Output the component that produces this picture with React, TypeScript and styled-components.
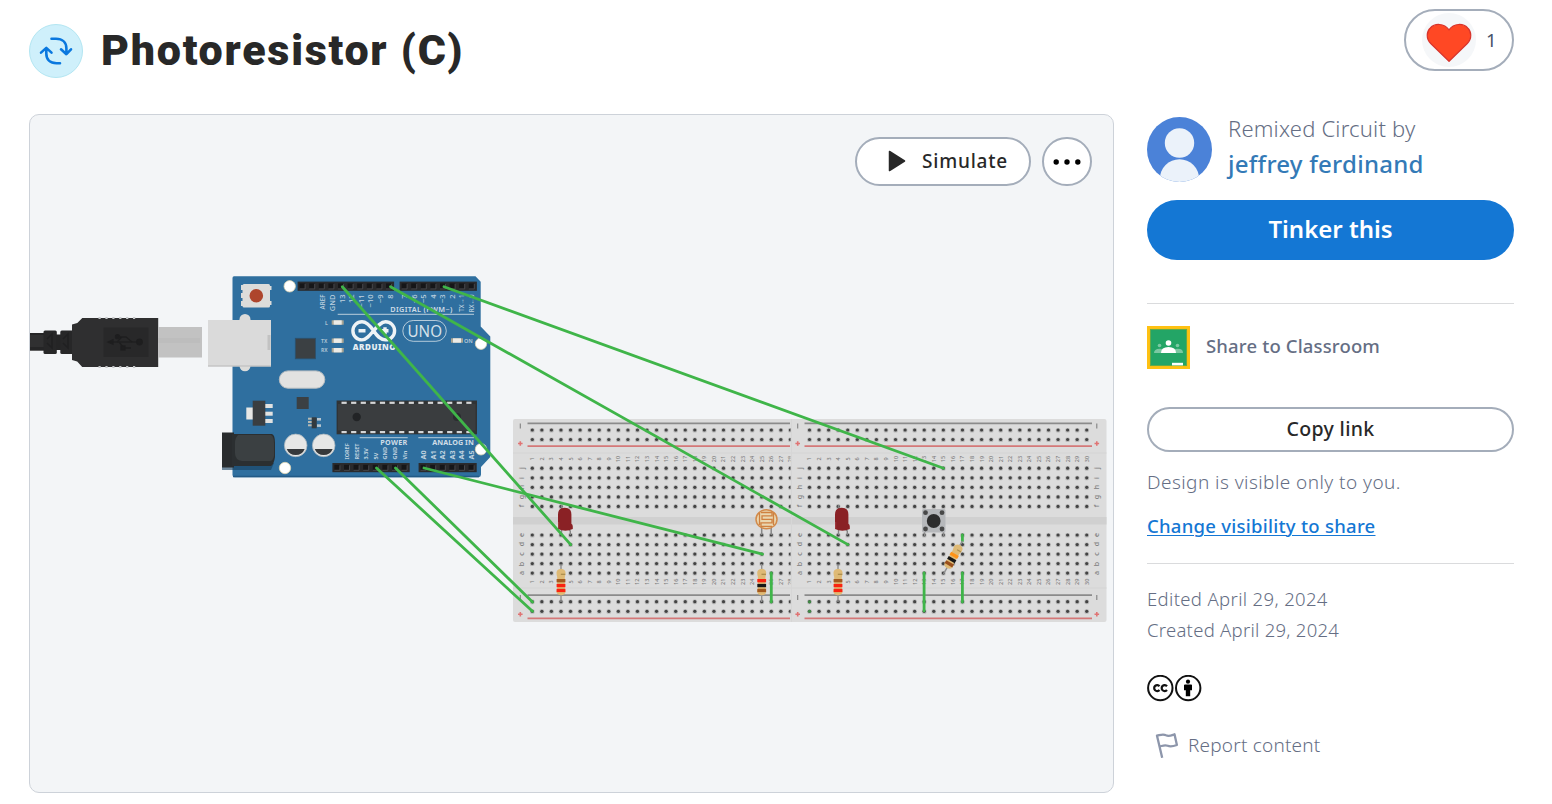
import React from "react";
import styled, { createGlobalStyle } from "styled-components";

const Global = createGlobalStyle`
  * { box-sizing: border-box; }
  body { margin: 0; background: #fff; overflow: hidden; font-family: "Noto Sans", "Open Sans", sans-serif; }
  button { font-family: inherit; margin: 0; cursor: pointer; }
`;

const Page = styled.div`
  width: 1552px;
  height: 804px;
  padding: 9px 38px 0 29px;
`;
const Header = styled.header`
  height: 105px;
  display: flex;
  align-items: flex-start;
  justify-content: space-between;
`;
const TitleGroup = styled.div`
  display: flex;
  align-items: center;
  gap: 18px;
  padding-top: 15px;
`;
const RemixBadge = styled.div`
  width: 54px;
  height: 54px;
  border-radius: 50%;
  background: #cff0fb;
  border: 1px solid #b3e6f2;
  display: flex;
  align-items: center;
  justify-content: center;
`;
const Title = styled.h1`
  margin: 0;
  font: 900 43px/52px Roboto, sans-serif;
  letter-spacing: 1.75px;
  padding-bottom: 2px;
  color: #282828;
  white-space: nowrap;
`;
const LikeButton = styled.button`
  width: 110px;
  height: 62px;
  padding: 0 0 0 16px;
  border: 2px solid #a4adba;
  border-radius: 31px;
  background: #fff;
  display: flex;
  align-items: center;
  gap: 10px;
`;
const HeartDisc = styled.span`
  width: 54px;
  height: 54px;
  border-radius: 50%;
  background: #f5f7f9;
  display: flex;
`;
const Main = styled.main`
  display: grid;
  grid-template-columns: 1085px 367px;
  column-gap: 33px;
`;
const Preview = styled.section`
  position: relative;
  height: 679px;
  border: 1px solid #cdd2d9;
  border-radius: 10px;
  background: #f3f5f7;
  overflow: hidden;
`;
const Drawing = styled.svg`
  display: block;
  width: 1083px;
  height: 677px;
`;
const Actions = styled.div`
  position: absolute;
  top: 22px;
  right: 21px;
  display: flex;
  gap: 11px;
`;
const SimulateButton = styled.button`
  width: 176px;
  height: 49px;
  padding: 0 0 1px 31px;
  border: 2px solid #a4adba;
  border-radius: 25px;
  background: #fff;
  display: flex;
  align-items: center;
  gap: 16px;
`;
const MoreButton = styled.button`
  width: 50px;
  height: 49px;
  padding: 0;
  border: 2px solid #a4adba;
  border-radius: 25px;
  background: #fff;
  display: flex;
  align-items: center;
  justify-content: center;
`;
const Sidebar = styled.aside`
  padding-top: 3px;
  display: flex;
  flex-direction: column;
`;
const Label = styled.span<{ $size: number; $weight?: number; $color?: string; $track?: number; $line?: number }>`
  font-size: ${(p) => p.$size}px;
  font-weight: ${(p) => p.$weight ?? 350};
  color: ${(p) => p.$color ?? "#656e84"};
  letter-spacing: ${(p) => p.$track ?? 0}px;
  line-height: ${(p) => p.$line ?? 30}px;
  white-space: nowrap;
`;
const Author = styled.div`
  height: 65px;
  display: flex;
  gap: 16px;
`;
const AuthorText = styled.div`
  display: flex;
  flex-direction: column;
  margin-top: -6px;
`;
const TinkerButton = styled.button`
  margin-top: 18px;
  height: 60px;
  padding: 0 0 2px;
  border: 0;
  border-radius: 30px;
  background: #1477d4;
`;
const Divider = styled.hr<{ $top: number }>`
  width: 100%;
  height: 1px;
  border: 0;
  margin: ${(p) => p.$top}px 0 0;
  background: #dadbdd;
`;
const Classroom = styled.div`
  margin-top: 22px;
  height: 43px;
  display: flex;
  align-items: center;
  gap: 16px;
`;
const ClassroomName = styled.div`
  padding-bottom: 3px;
`;
const CopyButton = styled.button`
  margin-top: 38px;
  height: 45px;
  padding: 0 0 2px;
  border: 2px solid #a4adba;
  border-radius: 23px;
  background: #fff;
`;
const Visibility = styled.div`
  display: flex;
  flex-direction: column;
  gap: 14px;
  padding-top: 15px;
`;
const ShareLink = styled.a`
  align-self: flex-start;
  font-size: 18.5px;
  font-weight: 500;
  line-height: 30px;
  letter-spacing: 0.26px;
  color: #1477d4;
  white-space: nowrap;
  text-decoration: underline;
  text-decoration-thickness: 1px;
  text-underline-offset: 2px;
`;
const Dates = styled.div`
  display: flex;
  flex-direction: column;
  margin-top: 19px;
`;
const License = styled.div`
  display: flex;
  margin-top: 30px;
`;
const Report = styled.div`
  display: flex;
  align-items: center;
  gap: 9px;
  margin-top: 27px;
  padding-left: 8px;
`;

const PITCH = 9.56;
const WIRE = "#3fb549";
const METAL = "#dcdcda";

const range = (n: number) => Array.from({ length: n }, (_, i) => i);

const HOLE_ROWS = [430, 439.5, 468.2, 477.8, 487.3, 496.9, 506.4, 535, 544.6, 554.1, 563.6, 573.1, 601.7, 611.3];
const LETTERS: [string, number][] = [
  ["j", 468], ["i", 478], ["h", 487], ["g", 497], ["f", 506],
  ["e", 535], ["d", 544], ["c", 554], ["b", 564], ["a", 573],
];

function Turned({ x, y, size = 5.5, fill = "#7d7d7d", weight = 500, anchor = "middle", children }: {
  x: number; y: number; size?: number; fill?: string; weight?: number; anchor?: "start" | "middle" | "end"; children: React.ReactNode;
}) {
  return (
    <text transform={`translate(${x} ${y}) rotate(-90)`} fontSize={size} fill={fill} fontWeight={weight} textAnchor={anchor} dy={size * 0.36}>
      {children}
    </text>
  );
}

function Rails({ x1, x2 }: { x1: number; x2: number }) {
  return (
    <g>
      {[423.4, 595.2].map((y) => <line key={y} x1={x1} x2={x2} y1={y} y2={y} stroke="#8b8b8b" strokeWidth="1.8" />)}
      {[446.2, 618.3].map((y) => <line key={y} x1={x1} x2={x2} y1={y} y2={y} stroke="#d47878" strokeWidth="1.8" />)}
    </g>
  );
}

function RailSigns({ x }: { x: number }) {
  return (
    <g>
      {[426, 597.5].map((y) => <path key={y} d={`M${x} ${y - 2.5}v5`} stroke="#808080" strokeWidth="1.1" />)}
      {[443.5, 614.2].map((y) => <path key={y} d={`M${x - 2.3} ${y}h4.6M${x} ${y - 2.3}v4.6`} stroke="#e07474" strokeWidth="1.6" />)}
    </g>
  );
}

function Columns({ x, count }: { x: number; count: number }) {
  return (
    <g>
      {range(count).map((c) => (
        <g key={c}>
          {HOLE_ROWS.map((y) => (
            <g key={y}>
              <rect x={x + c * PITCH - 2.3} y={y - 2.1} width="4.6" height="4.6" rx="1.6" fill="#b9b9b9" />
              <circle cx={x + c * PITCH} cy={y} r="1.6" fill="#434343" />
            </g>
          ))}
          <Turned x={x + c * PITCH} y={459}>{c + 1}</Turned>
          <Turned x={x + c * PITCH} y={581.8}>{c + 1}</Turned>
        </g>
      ))}
    </g>
  );
}

function Breadboard() {
  return (
    <g>
      <rect x="513" y="419" width="593.5" height="203" rx="2" fill="#dcdcdc" />
      <rect x="513" y="452.5" width="593.5" height="1" fill="#d4d4d4" />
      <rect x="513" y="587.5" width="593.5" height="1" fill="#d4d4d4" />
      <rect x="513" y="517" width="593.5" height="7.5" fill="#d0d0d0" />
      <path d="M791.5 419v203" stroke="#d6d6d6" />
      <clipPath id="leftHalf"><rect x="513" y="419" width="277.5" height="203" /></clipPath>
      <g clipPath="url(#leftHalf)"><Columns x={532.3} count={28} /></g>
      <Columns x={809.5} count={30} />
      <Rails x1={527.5} x2={790} />
      <Rails x1={804.5} x2={1092} />
      <RailSigns x={520.3} />
      <RailSigns x={797.7} />
      <RailSigns x={1096.8} />
      {[521.5, 799, 1096.5].map((x) => LETTERS.map(([t, y]) => <Turned key={`${x}${t}`} x={x} y={y} size={7}>{t}</Turned>))}
      <circle cx="809.5" cy="601.8" r="1.6" fill="#3f8a45" />
      <circle cx="809.5" cy="611.3" r="1.6" fill="#3f8a45" />
    </g>
  );
}

function Led({ x }: { x: number }) {
  return (
    <g>
      <path d={`M${x - 3.5} 505v30M${x + 2.5} 528l2.8 3v4`} stroke="#858585" strokeWidth="1.4" fill="none" />
      <path d={`M${x - 7} 529v-14.5q0-6.7 6.7-6.7t6.7 6.7v9.3q1.4.6 1.4 2.6v2.6q-7.4 3.4-14.8 0z`} fill="#8a2125" />
      <path d={`M${x - 6.3} 522v6.5`} stroke="#a63c40" strokeWidth="1" />
    </g>
  );
}

function Resistor({ x, y, angle = 0, bands }: { x: number; y: number; angle?: number; bands: string[] }) {
  return (
    <g transform={`translate(${x} ${y}) rotate(${angle})`}>
      <path d="M0-18V20" stroke="#8f8f8f" strokeWidth="1.4" />
      <path d="M-4.5-9.5Q-4.5-12.5 0-13.3Q4.5-12.5 4.5-9.5Q4.5-7 3.8-5V6.5Q4.5 8 4.5 10Q4 13 0 13.3Q-4 13-4.5 10Q-4.5 8-3.8 6.5V-5Q-4.5-7-4.5-9.5z" fill="#dfba75" />
      <rect x="-.2" y="-8.3" width="4.5" height="1.2" fill="#a98b4b" />
      {bands.map((b, i) => <rect key={i} x="-4.4" y={-3 + i * 4.9} width="8.8" height="3.3" fill={b} />)}
    </g>
  );
}

function PinHeader({ x, count }: { x: number; count: number }) {
  return (
    <g transform={`translate(${x})`}>
      <rect width={count * 9.6 + 0.5} height="9.2" fill="#2a2a2c" />
      {range(count).map((i) => (
        <g key={i}>
          <rect x={i * 9.6 + 2} y="1.8" width="5.5" height="5.5" fill="#161618" />
          <path d={`M${i * 9.6 + 2} 7.3h5.5v-5`} stroke="#505255" strokeWidth=".8" fill="none" />
        </g>
      ))}
    </g>
  );
}

function UsbPlug() {
  return (
    <g>
      <rect x="26" y="333" width="21" height="17.7" fill="#252526" />
      <rect x="26" y="335" width="19" height="12" fill="#303031" />
      <rect x="43.5" y="330.5" width="13.3" height="23.5" rx="1.5" fill="#272728" />
      <rect x="56" y="334.5" width="6" height="15.5" fill="#252526" />
      <rect x="60.3" y="330.5" width="13" height="23.5" rx="1.5" fill="#272728" />
      <path d="M47 339l5-5v14l-5-5M63 339l5-5v14l-5-5" fill="none" stroke="#202021" strokeWidth="1.5" />
      <path d="M72 324.5l5.3-1.5 5-5H158.2V367H82.2l-5-5.5-5.2-1.5z" fill="#2f2f30" />
      <path d="M98.5 318h39M98.5 367h39" stroke="#c4c6c8" strokeWidth="2" strokeDasharray="2.2 4.7" />
      <rect x="103.5" y="327.5" width="45" height="29.5" fill="#282829" />
      <g stroke="#1e1e1f" fill="#1e1e1f" strokeWidth="1.3">
        <path d="M109 342h31" /><path d="M117 342l5-5h-3M118 337h8l6 5M119 342l5 6h7" fill="none" />
        <circle cx="139.5" cy="342" r="2.8" /><circle cx="117.5" cy="336.7" r="2" /><rect x="121" y="346" width="4" height="4" />
        <path d="M108 342l5-2.2v4.4z" />
      </g>
      <rect x="158.2" y="327" width="43.8" height="30.5" fill="#c2c2c2" />
      <rect x="158.2" y="338" width="42" height="5" fill="#bdbdbd" />
    </g>
  );
}

function ArduinoBoard() {
  const pins: [string, number][] = [["AREF", 322.7], ["GND", 332], ["13", 342], ["12", 351.5], ["~11", 361], ["~10", 370.7], ["~9", 380.3], ["8", 390], ["7", 403.8], ["~6", 413.8], ["~5", 423.5], ["4", 433], ["~3", 442.5], ["2", 452.3], ["TX→1", 462], ["RX←0", 471.5]];
  const low: [string, number][] = [["IOREF", 347], ["RESET", 356.7], ["3.3V", 366], ["5V", 376], ["GND", 385.5], ["GND", 395], ["Vin", 404.7], ["A0", 423.5], ["A1", 433], ["A2", 442.6], ["A3", 452], ["A4", 461.7], ["A5", 471.3]];
  return (
    <g>
      <path d="M234 276.3H475.5L480.7 281.7V326.5L490.3 336.5V457L481 467V474.5Q481 477 478.5 477.3H234.5Q232.5 477 232.5 475V278Q232.5 276.3 234 276.3z" fill="#2f6f9f" />
      <path d="M233 476.5H479" stroke="#225a86" strokeWidth="1.5" />
      <g fill={METAL}>
        <rect x="242.5" y="284" width="27.5" height="23.5" rx="1.5" />
        {[285, 293, 301].map((y) => <rect key={y} x="241" y={y} width="3" height="5" />)}
        <rect x="268" y="286" width="3.5" height="4" /><rect x="268" y="301" width="3.5" height="4" />
        <circle cx="245" cy="319.5" r="5.5" /><circle cx="245" cy="365.8" r="5.5" />
      </g>
      <circle cx="256.3" cy="295.7" r="6.8" fill="#ae452c" />
      <rect x="208" y="320" width="63" height="46.5" fill="#dadada" />
      <path d="M208 366h63" stroke="#bbb" /><rect x="267.5" y="335" width="3" height="15" fill="#c2c2c2" />
      {[[289.7, 286.3], [481, 343.7], [481, 449.3], [285, 468]].map(([x, y]) => <circle key={y} cx={x} cy={y} r="5.7" fill="#fff" stroke="#ded5b2" strokeWidth=".8" />)}
      <g transform="translate(0 281.6)"><PinHeader x={297.6} count={10} /><PinHeader x={399.6} count={8} /></g>
      <g transform="translate(0 463)"><PinHeader x={332.4} count={8} /><PinHeader x={418.6} count={6} /></g>
      {pins.map(([t, x]) => <Turned key={x} x={x} y={294.5} size={t.length > 3 ? 6.3 : 7.5} anchor="end" fill="#bfd2df">{t}</Turned>)}
      {low.map(([t, x]) => <Turned key={x} x={x} y={459.5} size={x < 410 ? 5.5 : 7.2} anchor="start" fill="#bfd2df" weight={700}>{t}</Turned>)}
      <path d="M337.7 314.4H474M359.7 437.7H407.7M418.3 437.7H474" stroke="#9dbacf" strokeWidth="1.2" />
      <g fill="#cfdde7" fontWeight="700">
        <text x="390.3" y="312.2" fontSize="7.3" textLength="62" fontWeight="600">DIGITAL (PWM~)</text>
        <text x="380.3" y="445.2" fontSize="7.2" textLength="27">POWER</text>
        <text x="432.3" y="445.2" fontSize="7.2" textLength="41.5">ANALOG IN</text>
        <text x="352.7" y="350" fontSize="8" textLength="43" fontWeight="900" fill="#e6eef3">ARDUINO</text>
        <g fill="#a9c2d3">
          <text x="325" y="324.5" fontSize="5">L</text>
          <text x="321" y="342.7" fontSize="5">TX</text>
          <text x="321" y="352" fontSize="5">RX</text>
          <text x="464" y="342.6" fontSize="5.5">ON</text>
        </g>
      </g>
      <path d="M373.6 330.8C369 324 366 321.7 362 321.7a9 9 0 0 0 0 18.2C370 339.9 377 321.7 385.5 321.7a9 9 0 0 1 0 18.2C380 339.9 377 336 373.6 330.8M358.5 330.8h7M381.5 330.8h7M385 327.3v7" fill="none" stroke="#eef3f6" strokeWidth="3.4" />
      <rect x="402.8" y="320.5" width="43.5" height="20.8" rx="10.4" fill="none" stroke="#b5cbda" strokeWidth="1" />
      <text x="407.5" y="337" fontSize="16.5" textLength="34.5" lengthAdjust="spacingAndGlyphs" fill="#d5e1e9">UNO</text>
      {[[331.7, 320.3], [331.7, 338.5], [331.7, 348], [451, 338.3]].map(([x, y]) => (
        <g key={`${x}${y}`}><rect x={x} y={y} width="12" height="4.4" fill="#aaa594" /><rect x={x + 2} y={y} width="8" height="4.4" fill="#ecebe6" /></g>
      ))}
      <rect x="295.3" y="338.3" width="20.2" height="20.5" fill="#3b4043" stroke="#2c506d" strokeWidth=".8" />
      <rect x="296.7" y="397" width="12" height="12" fill="#3b4043" />
      <rect x="279.3" y="370.9" width="45.5" height="17.3" rx="8.6" fill="#e2e2e1" stroke="#b9bec1" />
      <rect x="246.3" y="407.5" width="7" height="12" fill="#e7e7e5" />
      {[404, 411.7, 419].map((y) => <rect key={y} x="265" y={y} width="7.7" height="4" fill="#e1e2e1" />)}
      <rect x="252.7" y="400.7" width="12.6" height="25" fill="#3a3e41" />
      {[418, 424.3].map((y) => <rect key={y} x="317" y={y} width="4" height="2.6" fill="#b8c6cf" />)}
      {[417.7, 421, 424.3].map((y) => <rect key={y} x="308" y={y} width="4" height="2" fill="#b5b9b3" />)}
      <rect x="311.7" y="417.3" width="5" height="11" fill="#333a3e" />
      {[295.7, 323.7].map((x) => (
        <g key={x}><circle cx={x} cy="445.4" r="11.3" fill="#e6e7e6" stroke="#a8b5bd" strokeWidth=".8" /><path d={`M${x - 9} 449h18q-2.5 6-9 6t-9-6z`} fill="#36393b" /></g>
      ))}
      <path d="M222 463h52l-3 7h-49z" fill="#17405f" opacity=".6" />
      <rect x="222" y="432.5" width="12" height="35" fill="#292c2e" />
      <path d="M232 434h40q3 1 3 9v14q-1 7-4 9H232z" fill="#2b2f31" />
      <path d="M238 435h33q3 2 3 8v13q-1 5-4 5H242q-7-1-7-8v-10q0-5 3-8z" fill="#3b4042" />
      <rect x="336.6" y="400.5" width="140.4" height="33.8" fill="#303335" />
      <rect x="338" y="404" width="137.5" height="26.5" fill="#3a3d3f" />
      {range(14).map((i) => <g key={i} fill="#d5d6d7"><rect x={341.5 + i * 9.6} y="401.7" width="5.2" height="2.2" /><rect x={341.5 + i * 9.6} y="431" width="5.2" height="2.2" /></g>)}
      <circle cx="356.7" cy="417" r="4.2" fill="#222426" /><circle cx="457" cy="417" r="4" fill="#2b2d2f" />
    </g>
  );
}

function Circuit() {
  return (
    <Drawing viewBox="30 115 1083 677" fontFamily="Noto Sans, sans-serif">
      <Breadboard />
      <UsbPlug />
      <ArduinoBoard />
      <Led x={565} />
      <Led x={842} />
      <Resistor x={561} y={582} bands={["#a3591e", "#fa2310", "#fa2310"]} />
      <Resistor x={761.7} y={582} bands={["#fa2310", "#171717", "#a3591e"]} />
      <Resistor x={838} y={582} bands={["#a3591e", "#fa2310", "#fa2310"]} />
      <path d="M761.7 526v9M771.2 526v9" stroke="#888" strokeWidth="1.5" />
      <ellipse cx="766.5" cy="519.3" rx="10.5" ry="9.5" fill="#ead7b0" stroke="#d28a4a" strokeWidth="1.5" />
      <path d="M761 512.5h11v3.3h-10v3.5h10v3.5h-11v3.5h11M759.5 513v12M773.5 513v12" fill="none" stroke="#cf8140" strokeWidth="1.3" />
      <path d="M924.5 530v6M943.5 530v6" stroke="#888" strokeWidth="1.5" />
      <rect x="922" y="509" width="23.5" height="23.5" rx="1.5" fill="#b6b8bb" />
      {[[925.5, 512.7], [942, 512.7], [925.5, 529], [942, 529]].map(([x, y]) => <circle key={`${x}${y}`} cx={x} cy={y} r="2.4" fill="#484848" />)}
      <circle cx="933.7" cy="521" r="6.9" fill="#2d2d2d" />
      <g stroke={WIRE} strokeWidth="2.8" strokeLinecap="round">
        <path d="M342.3 286.7L570.7 544.6" />
        <path d="M390.5 286.7L848 544.6" />
        <path d="M444 286.7L943.5 468.2" />
        <path d="M424 468L762.5 554.2" />
        <path d="M376.5 468L532.5 611.3" />
        <path d="M395.5 468L532.5 602" />
        <path d="M771.3 573V602M924.1 573V611M962.4 573V602M962.4 535V541" />
      </g>
      <Resistor x={953.5} y={556.5} angle={30} bands={["#ff9317", "#171717", "#9a501c"]} />
    </Drawing>
  );
}

const RemixIcon = () => (
  <svg width="34" height="30" viewBox="0 0 34 30" fill="none" stroke="#0a78df" strokeWidth="2.6" strokeLinecap="round" strokeLinejoin="round">
    <path d="M12.5 2.8H17C23.5 2.8 27.4 6.5 27.4 12.5V18M22 13.3L27.4 18.2L32 13.3" />
    <path d="M21 27.2H17.5C11 27.2 7.3 23.5 7.3 17.5V12.2M2 16.6L7.3 11.9L12.5 16.6" />
  </svg>
);
const HeartIcon = () => (
  <svg width="54" height="54" viewBox="0 0 54 54">
    <path d="M27 48.3L8.7 30.5C3.8 25.5 4.5 18.5 8.3 15C13 9.9 22 10.2 27 16.8C32 10.2 41 9.9 45.7 15C49.5 18.5 50.2 25.5 45.3 30.5z" fill="#ff4824" stroke="#d8342c" strokeWidth="1.2" />
  </svg>
);
const Avatar = () => (
  <svg width="65" height="65" viewBox="0 0 65 65">
    <clipPath id="face"><circle cx="32.5" cy="32.5" r="32.5" /></clipPath>
    <g clipPath="url(#face)"><rect width="65" height="65" fill="#4b82d8" /><circle cx="32.5" cy="26" r="14.7" fill="#ebf2fa" /><circle cx="32.5" cy="62" r="19.7" fill="#ebf2fa" /></g>
  </svg>
);
const ClassroomIcon = () => (
  <svg width="43" height="43" viewBox="0 0 43 43">
    <rect width="43" height="43" fill="#ffc112" /><rect x="3.3" y="3.3" width="36.4" height="36.4" fill="#23a566" stroke="#63a846" strokeWidth=".7" />
    <g fill="#7bc8a2"><circle cx="12.5" cy="19.5" r="1.8" /><circle cx="30.5" cy="19.5" r="1.8" /><path d="M7 27q0-4 5.5-4.2T18 27zM25 27q0-4 5.5-4.2T36 27z" /></g>
    <g fill="#fff"><circle cx="21.5" cy="17" r="2.8" /><path d="M14 27q0-6 7.5-6t7.5 6z" /><rect x="25" y="36.8" width="11" height="2.6" /></g>
  </svg>
);
const LicenseIcons = () => (
  <svg width="55" height="28" viewBox="0 0 55 28">
    <g fill="none" stroke="#111" strokeWidth="2"><circle cx="13.3" cy="13" r="12.2" /><circle cx="41.2" cy="13" r="12.2" />
      <path d="M12.5 11.2A3 3 0 1 0 12.5 15M20 11.2A3 3 0 1 0 20 15" strokeWidth="2.2" /></g>
    <circle cx="41" cy="6.7" r="2.1" /><path d="M38 9.5h6.2q.8 0 .8.8v5h-1.8v6h-4.4v-6H37v-5q0-.8 1-.8z" />
  </svg>
);
const FlagIcon = () => (
  <svg width="24" height="26" viewBox="0 0 24 26" fill="none" stroke="#8d96ab" strokeWidth="2.3" strokeLinejoin="round">
    <path d="M7.2 25.8L2 3.7C5.5 3 8 1.7 11 3.3C14 4.7 16.5 3.3 19.5 2.3L21.9 13C18.7 14.2 15.7 15.2 12.7 13.8C9.7 12.5 7.7 13.8 4.5 14.6" />
  </svg>
);

export default function App() {
  return (
    <>
      <Global />
      <Page>
        <Header>
          <TitleGroup>
            <RemixBadge><RemixIcon /></RemixBadge>
            <Title>Photoresistor (C)</Title>
          </TitleGroup>
          <LikeButton>
            <HeartDisc><HeartIcon /></HeartDisc>
            <Label $size={18.5} $weight={400} $color="#46536b">1</Label>
          </LikeButton>
        </Header>
        <Main>
          <Preview>
            <Circuit />
            <Actions>
              <SimulateButton>
                <svg width="18" height="22" viewBox="0 0 18 22"><path d="M1.5 1.5L16.5 11L1.5 20.5z" fill="#282828" stroke="#282828" strokeLinejoin="round" strokeWidth="1.5" /></svg>
                <Label $size={19} $weight={500} $color="#282828" $track={0.8}>Simulate</Label>
              </SimulateButton>
              <MoreButton>
                <svg width="30" height="8" viewBox="0 0 30 8">{[4.2, 15, 25.8].map((x) => <circle key={x} cx={x} cy="4" r="2.7" />)}</svg>
              </MoreButton>
            </Actions>
          </Preview>
          <Sidebar>
            <Author>
              <Avatar />
              <AuthorText>
                <Label $size={22} $line={35} $track={0.2}>Remixed Circuit by</Label>
                <Label $size={24} $weight={500} $color="#337ab7" $line={35} $track={0.25}>jeffrey ferdinand</Label>
              </AuthorText>
            </Author>
            <TinkerButton><Label $size={24} $weight={600} $color="#fff">Tinker this</Label></TinkerButton>
            <Divider $top={43} />
            <Classroom>
              <ClassroomIcon />
              <ClassroomName><Label $size={18.5} $weight={500} $track={0.15}>Share to Classroom</Label></ClassroomName>
            </Classroom>
            <CopyButton><Label $size={19.5} $weight={500} $color="#282828" $track={0.35}>Copy link</Label></CopyButton>
            <Visibility>
              <Label $size={19} $track={0.44}>Design is visible only to you.</Label>
              <ShareLink>Change visibility to share</ShareLink>
            </Visibility>
            <Divider $top={22} />
            <Dates>
              <Label $size={18.5} $line={31} $track={0.35}>Edited April 29, 2024</Label>
              <Label $size={18.5} $line={31} $track={0.26}>Created April 29, 2024</Label>
            </Dates>
            <License><LicenseIcons /></License>
            <Report>
              <FlagIcon />
              <Label $size={19} $track={0.2}>Report content</Label>
            </Report>
          </Sidebar>
        </Main>
      </Page>
    </>
  );
}
